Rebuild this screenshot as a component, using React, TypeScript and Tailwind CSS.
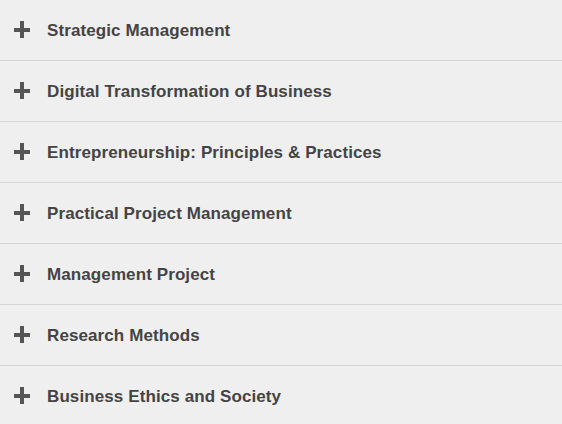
const courses = [
  'Strategic Management',
  'Digital Transformation of Business',
  'Entrepreneurship: Principles & Practices',
  'Practical Project Management',
  'Management Project',
  'Research Methods',
  'Business Ethics and Society',
];

function PlusIcon() {
  return (
    <svg width="16" height="17" viewBox="0 0 16 17" className="shrink-0 -mt-[4px]">
      <rect x="6" y="0" width="4" height="17" fill="#555555" />
      <rect x="0" y="7" width="16" height="4" fill="#555555" />
    </svg>
  );
}

export default function App() {
  return (
    <div className="w-[562px] h-[424px] overflow-hidden bg-[#efefef] font-['Liberation_Sans',Arial,sans-serif]">
      {courses.map((c) => (
        <div
          key={c}
          className="h-[61px] flex items-center border-b border-[#d4d4d4] pl-[14px] pt-[2px]"
        >
          <PlusIcon />
          <span className="ml-[17px] text-[17px] font-bold tracking-[0.1px] text-[#444444]">{c}</span>
        </div>
      ))}
    </div>
  );
}
